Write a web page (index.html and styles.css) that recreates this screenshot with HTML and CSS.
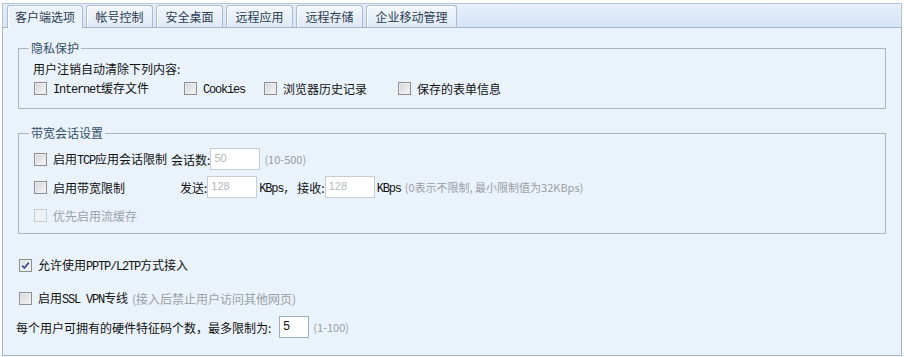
FILE: index.html
```html
<!DOCTYPE html>
<html>
<head lang="zh-CN">
    <meta charset="UTF-8">
    <title>客户端选项</title>
    <link rel="stylesheet" href="styles.css">
</head>
<body>
<div class="tabs">
    <span class="tab on">客户端选项</span>
    <span class="tab">帐号控制</span>
    <span class="tab">安全桌面</span>
    <span class="tab">远程应用</span>
    <span class="tab">远程存储</span>
    <span class="tab">企业移动管理</span>
</div>
<div class="panel">
    <!-- 隐私保护 -->
    <fieldset class="group g1">
        <legend>隐私保护</legend>
        <div class="line">用户注销自动清除下列内容:</div>
        <div class="line">
            <label class="opt w1"><span class="cb"></span><span><span class="m">Internet</span>缓存文件</span></label>
            <label class="opt w2"><span class="cb"></span><span><span class="m">Cookies</span></span></label>
            <label class="opt w3"><span class="cb"></span><span>浏览器历史记录</span></label>
            <label class="opt"><span class="cb"></span><span>保存的表单信息</span></label>
        </div>
    </fieldset>

    <!-- 带宽会话设置 -->
    <fieldset class="group g2">
        <legend>带宽会话设置</legend>
        <div class="row">
            <label class="opt"><span class="cb"></span><span>启用<span class="m">TCP</span>应用会话限制</span></label>
            <span class="sp">会话数:</span>
            <span class="ipt dis">50</span>
            <span class="tip">(10-500)</span>
        </div>
        <div class="row">
            <label class="opt w4"><span class="cb"></span><span>启用带宽限制</span></label>
            <span>发送:</span>
            <span class="ipt dis">128</span>
            <span class="unit"><span class="m">KBps,</span></span><span class="sp wide">接收:</span>
            <span class="ipt dis">128</span>
            <span class="unit"><span class="m">KBps</span></span>
            <span class="tip">(0表示不限制, 最小限制值为32KBps)</span>
        </div>
        <div class="row last">
            <label class="opt off"><span class="cb"></span><span>优先启用流缓存</span></label>
        </div>
    </fieldset>

    <div class="line pptp">
        <label class="opt"><span class="cb checked"><svg width="11" height="11" viewBox="0 0 11 11"><path d="M2.2 5.6 L4.4 8 L8.8 2.6" fill="none" stroke="#3c4f86" stroke-width="1.7"/></svg></span><span>允许使用<span class="m">PPTP/L2TP</span>方式接入</span></label>
    </div>
    <div class="line ssl">
        <label class="opt"><span class="cb"></span><span>启用<span class="m">SSL VPN</span>专线</span></label>
        <span class="tip big">(接入后禁止用户访问其他网页)</span>
    </div>
    <div class="row hw">
        <span>每个用户可拥有的硬件特征码个数，最多限制为:</span>
        <span class="ipt small">5</span>
        <span class="tip">(1-100)</span>
    </div>
</div>
</body>
</html>
```

FILE: styles.css
```css
body {
    margin: 0;
    font-family: "Noto Sans CJK SC", "Liberation Sans", sans-serif;
    font-size: 12px;
    color: #111;
    background: #fff;
}

.m {
    font-family: "Liberation Mono", "Noto Sans CJK SC", monospace;
    font-size: 12px;
    letter-spacing: -1.2px;
    white-space: pre;
}

/* tabs */
.tabs {
    display: flex;
    align-items: flex-end;
    gap: 3px;
    height: 23px;
    margin: 3px 2px 0;
    padding-left: 4px;
    border: 1px solid #b3c5d8;
    border-bottom: 0;
    background: linear-gradient(#e6eefa, #d6e4f6);
}

.tab {
    height: 21px;
    line-height: 21px;
    padding: 0 8.5px;
    border: 1px solid #a9bcd2;
    border-bottom: 0;
    border-radius: 3px 3px 0 0;
    background: linear-gradient(#f3f7fd, #dfe9f6);
    box-shadow: inset 1px 1px 0 #fff;
    color: #2a3c52;
    font-size: 12px;
}

.tab.on {
    height: 22px;
    padding: 0 7px;
    margin-bottom: -1px;
    background: #eaf2fb;
    position: relative;
    z-index: 1;
}

/* panel */
.panel {
    margin: 0 2px;
    height: 327px;
    padding: 0 15px;
    border: 1px solid #a5b7ca;
    background: #eaf2fb;
    overflow: hidden;
}

.group {
    margin: 13px 0 0;
    padding: 3px 10px 10px 14px;
    border: 1px solid #aab5c0;
    min-width: 0;
}

.group legend {
    padding: 0 2px;
    margin-left: -4px;
    line-height: 14px;
    color: #34506e;
}

.g2 {
    margin-top: 17px;
    padding-top: 5px;
    padding-bottom: 4px;
}

.line {
    display: flex;
    align-items: center;
    height: 20px;
}

.row {
    display: flex;
    align-items: center;
    height: 28px;
}

.opt {
    display: flex;
    align-items: center;
    white-space: nowrap;
}

.w1 { width: 150px; }
.w2 { width: 80px; }
.w3 { width: 134px; }
.w4 { width: 147px; }

.opt.off {
    color: #9ca3ab;
}

/* checkbox */
.cb {
    display: flex;
    align-items: center;
    justify-content: center;
    flex: none;
    width: 11px;
    height: 11px;
    margin: 0 6px 0 1px;
    border: 1px solid #8c8f93;
    background: linear-gradient(135deg, #d2d4d7, #f6f6f6);
    box-shadow: inset 0 0 0 1px #ececec;
}

.cb.checked {
    background: linear-gradient(135deg, #dcdee2, #fafafa);
}

.off .cb {
    border-color: #c9ced4;
    background: #eff2f5;
    box-shadow: none;
}

.sp {
    margin-left: 4px;
}

.sp.wide {
    margin-left: 8px;
}

.unit {
    margin-left: 2px;
}

/* text box */
.ipt {
    width: 42px;
    height: 20px;
    line-height: 19px;
    padding: 0 3px;
    border: 1px solid #c4ccd4;
    background: #fff;
    color: #b4b9be;
    font-family: "Liberation Sans", sans-serif;
    font-size: 11px;
}

.ipt.small {
    width: 22px;
    margin-left: 8px;
    border-color: #9fb0c2;
    color: #111;
    font-size: 12px;
}

.tip {
    margin-left: 4px;
    color: #9aa0a6;
    font-size: 11px;
}

.tip.big {
    font-size: 12px;
}

.pptp {
    margin-top: 21px;
}

.ssl {
    margin-top: 13px;
}

.hw {
    height: 24px;
    margin: 7px 0 0 -2px;
}
```
